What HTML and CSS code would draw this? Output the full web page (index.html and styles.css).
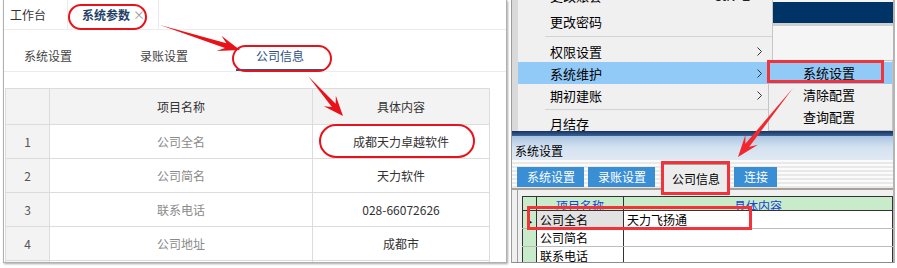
FILE: index.html
```html
<!doctype html>
<html lang="zh-CN">
<head>
	<meta charset="UTF-8">
	<title>系统参数 - 公司信息</title>
	<link rel="stylesheet" href="styles.css">
</head>
<body>
	<div class="page">
		<!-- left: web version -->
		<div class="shot-left">
			<div class="tabbar">
				<div class="tab tab-home">工作台</div>
				<div class="tab tab-cur">系统参数<span class="tab-x">×</span></div>
			</div>
			<div class="subtabs">
				<div class="subtab">系统设置</div>
				<div class="subtab">录账设置</div>
				<div class="subtab subtab-on">公司信息</div>
			</div>
			<div class="grid-wrap">
				<table class="info">
					<colgroup><col class="c-idx"><col class="c-name"><col class="c-val"></colgroup>
					<thead>
						<tr><th></th><th>项目名称</th><th>具体内容</th></tr>
					</thead>
					<tbody>
						<tr><td class="idx">1</td><td class="name">公司全名</td><td class="val">成都天力卓越软件</td></tr>
						<tr><td class="idx">2</td><td class="name">公司简名</td><td class="val">天力软件</td></tr>
						<tr><td class="idx">3</td><td class="name">联系电话</td><td class="val">028-66072626</td></tr>
						<tr><td class="idx">4</td><td class="name">公司地址</td><td class="val">成都市</td></tr>
						<tr><td class="idx"></td><td class="name"></td><td class="val"></td></tr>
					</tbody>
				</table>
			</div>
		</div>

		<!-- right: desktop version -->
		<div class="shot-right">
			<div class="top">
				<div class="strip"></div>
				<div class="menu">
					<div class="mi mi-cut">更改账套<span class="mi-key">Ctrl+Z</span></div>
					<div class="mi">更改密码</div>
					<div class="sep"></div>
					<div class="mi">权限设置<svg class="chev" width="5" height="9" viewBox="0 0 5 9"><polyline points="0.5,0.5 4.5,4.5 0.5,8.5"/></svg></div>
					<div class="mi mi-on">系统维护<svg class="chev" width="5" height="9" viewBox="0 0 5 9"><polyline points="0.5,0.5 4.5,4.5 0.5,8.5"/></svg></div>
					<div class="mi">期初建账<svg class="chev" width="5" height="9" viewBox="0 0 5 9"><polyline points="0.5,0.5 4.5,4.5 0.5,8.5"/></svg></div>
					<div class="sep sep-b"></div>
					<div class="mi">月结存</div>
				</div>
				<div class="app">
					<div class="navy"></div>
					<div class="app-line"></div>
				</div>
			</div>
			<div class="submenu">
				<div class="si si-on">系统设置</div>
				<div class="si">清除配置</div>
				<div class="si">查询配置</div>
			</div>
			<div class="win-bar"></div>
			<div class="win-title">系统设置</div>
			<div class="tabstrip">
				<div class="wt">系统设置</div>
				<div class="wt">录账设置</div>
				<div class="wt wt-on">公司信息</div>
				<div class="wt">连接</div>
			</div>
			<div class="tabpage">
				<table class="dgrid">
					<colgroup><col class="d-ind"><col class="d-name"><col class="d-val"></colgroup>
					<thead>
						<tr><th class="ind"></th><th><div class="hd">项目名称</div></th><th><div class="hd">具体内容</div></th></tr>
					</thead>
					<tbody>
						<tr><td class="ind"><span class="ptr">▶</span></td><td class="sel">公司全名</td><td>天力飞扬通</td></tr>
						<tr><td class="ind"></td><td>公司简名</td><td></td></tr>
						<tr><td class="ind"></td><td>联系电话</td><td></td></tr>
					</tbody>
				</table>
			</div>
		</div>
	</div>

	<!-- red annotations -->
	<svg class="marks" width="897" height="268" viewBox="0 0 897 268">
		<g class="mk-soft">
			<rect x="69" y="5" width="77" height="24" rx="12"/>
			<rect x="233" y="46" width="98" height="25" rx="12.5"/>
			<rect x="320" y="125" width="154" height="32" rx="16"/>
		</g>
		<polygon class="arrow" points="160,25 226.43,43.14 221.39,35.80 240,50 216.61,51.08 224.93,47.92"/>
		<polygon class="arrow" points="308,76 335.66,103.81 335.85,95.68 343,116 323.81,106.22 331.9,107.11"/>
		<g class="mk-box">
			<rect x="768.5" y="61.5" width="114" height="20"/>
			<rect x="662.5" y="162.5" width="66" height="31"/>
			<rect x="528.5" y="207.5" width="222" height="21"/>
		</g>
		<polygon class="arrow arrow-b" points="793,88 749.31,146.83 757.97,144.79 738,157 745.45,134.81 745.4,143.71"/>
	</svg>
</body>
</html>
```

FILE: styles.css
```css
*{
	margin: 0;
	padding: 0;
	box-sizing: border-box;
}
body{
	position: relative;
	width: 897px;
	height: 268px;
	overflow: hidden;
	background: #fff;
	font-family: "Noto Sans CJK SC", "Noto Sans", sans-serif;
	font-size: 12px;
}
.page{
	display: flex;
	align-items: flex-start;
	padding-left: 3px;
}

/* ---------- left shot ---------- */
.shot-left{
	width: 504px;
	height: 263px;
	border: 1px solid #b0b0b0;
	border-top: 0;
	box-shadow: 1px 1px 2px rgba(0,0,0,.35);
	background: #fff;
	overflow: hidden;
}
.tabbar{
	display: flex;
	height: 30px;
	border-bottom: 1px solid #ececec;
}
.tab{
	line-height: 29px;
	color: #333;
	border-right: 1px solid #ebebeb;
}
.tab-home{
	width: 64px;
	padding-left: 6px;
}
.tab-cur{
	width: 91px;
	padding-left: 14px;
	font-weight: bold;
	color: #233f66;
}
.tab-x{
	font-weight: normal;
	color: #999;
	margin-left: 3px;
}
.subtabs{
	display: flex;
	gap: 28px;
	height: 42px;
	border-bottom: 1px solid #ececec;
}
.subtab{
	height: 41px;
	padding: 17px 20px 0;
	line-height: 18px;
	color: #444;
}
.subtab-on{
	color: #2b4f86;
	border-bottom: 2px solid #2b5797;
}
.grid-wrap{
	padding: 16px 0 0 1px;
}
.info{
	width: 484px;
	table-layout: fixed;
	border-collapse: collapse;
}
.c-idx{ width: 44px; }
.c-name{ width: 263px; }
.c-val{ width: 177px; }
.info th,
.info td{
	border: 1px solid #dcdcdc;
	text-align: center;
	font-weight: normal;
}
.info th{
	height: 36px;
	background: #f3f3f3;
	color: #333;
}
.info td{
	height: 34px;
}
.info .idx{
	background: #f3f3f3;
	color: #555;
}
.info .name{ color: #8a8a8a; }
.info .val{ color: #333; }

/* ---------- right shot ---------- */
.shot-right{
	position: relative;
	margin-left: 4px;
	width: 384px;
	height: 263px;
	border-left: 1px solid #9c9c9c;
	border-right: 2px solid #b4b4b4;
	border-bottom: 1px solid #8c8c8c;
	background: #f0f0f0;
	overflow: hidden;
}
.top{
	display: flex;
	height: 131px;
	overflow: hidden;
}
.strip{
	width: 6px;
	background: #d9d9d9;
}
.menu{
	width: 255px;
	background: #f0f0f0;
	border-right: 1px solid #c8c8c8;
	font-size: 13px;
	color: #000;
}
.mi{
	display: flex;
	align-items: center;
	height: 22px;
	padding: 0 10px 0 32px;
}
.mi-cut{
	margin-top: -20px;
	height: 30px;
	padding-bottom: 4px;
	align-items: flex-end;
	line-height: 20px;
}
.mi-key{
	margin-left: auto;
	margin-right: 12px;
	color: #222;
}
.mi-on{
	background: #91c9f7;
}
.chev{
	margin-left: auto;
	fill: none;
	stroke: #333;
	stroke-width: 1;
}
.sep{
	margin: 4px 0 3px 27px;
	border-top: 1px solid #d3d3d3;
}
.sep-b{
	margin: 3px 0 2px 27px;
}
.app{
	flex: 1;
	padding-top: 2px;
	background: #f5f5f5;
}
.navy{
	height: 21px;
	background: #003466;
}
.app-line{
	height: 3px;
	background: #cfcfcf;
}
.submenu{
	position: absolute;
	top: 60px;
	left: 256px;
	width: 125px;
	height: 71px;
	padding-top: 1px;
	background: #f0f0f0;
	border: 1px solid #c4c4c4;
	font-size: 13px;
}
.si{
	height: 22px;
	line-height: 22px;
	padding-left: 34px;
}
.si-on{
	background: #91c9f7;
}
.win-bar{
	height: 5px;
	background: linear-gradient(#16325e, #3a6498);
}
.win-title{
	height: 24px;
	padding: 6px 0 0 3px;
	line-height: 18px;
	color: #000;
	background: linear-gradient(#a8c3e3, #d3e1f0 45%, #e0e9f3);
}
.tabstrip{
	display: flex;
	align-items: flex-end;
	gap: 4px;
	height: 30px;
	padding-left: 5px;
	border-bottom: 2px solid #aaa196;
	background: repeating-linear-gradient(#fbfbfb 0 2px, #e9e9e9 2px 4px);
}
.wt{
	height: 20px;
	margin-bottom: 1px;
	padding: 0 9px 0 10px;
	line-height: 20px;
	background: #3a8ed4;
	color: #fff;
}
.wt-on{
	height: 26px;
	margin: 0 1px -2px 4px;
	padding: 0 8px;
	line-height: 27px;
	background: #ececec;
	color: #000;
	border: 1px solid #aaa196;
	border-bottom: 0;
}
.tabpage{
	margin-left: 5px;
	padding: 6px 0 0 4px;
	border-left: 1px solid #a0a0a0;
	background: #f0f0f0;
	height: 80px;
}
.dgrid{
	width: 370px;
	table-layout: fixed;
	border-collapse: collapse;
	background: #fff;
	color: #000;
}
.d-ind{ width: 14px; }
.d-name{ width: 87px; }
.d-val{ width: 269px; }
.dgrid th{
	height: 14px;
	background: #c8ecca;
	border: 1px solid #333;
	font-weight: normal;
	color: #1942d6;
}
.hd{
	height: 13px;
	line-height: 17px;
	overflow: hidden;
}
.dgrid td{
	height: 18px;
	padding-left: 3px;
	border-bottom: 1px solid #bcbcbc;
	border-left: 1px solid #333;
	white-space: nowrap;
	overflow: hidden;
}
.dgrid td:last-child{
	border-right: 1px solid #333;
}
.dgrid .ind{
	padding: 0;
	background: #c8ecca;
	text-align: center;
}
.ptr{
	font-size: 6px;
	vertical-align: middle;
}
.dgrid .sel{
	background: #e2e2e2;
}

/* ---------- annotations ---------- */
.marks{
	position: absolute;
	top: 0;
	left: 0;
	pointer-events: none;
}
.mk-soft rect{
	fill: none;
	stroke: #e8131a;
	stroke-width: 2;
}
.mk-box rect{
	fill: none;
	stroke: #f2333a;
	stroke-width: 3;
}
.arrow{
	fill: #e8131a;
}
.arrow-b{
	fill: #f2282f;
}
```
